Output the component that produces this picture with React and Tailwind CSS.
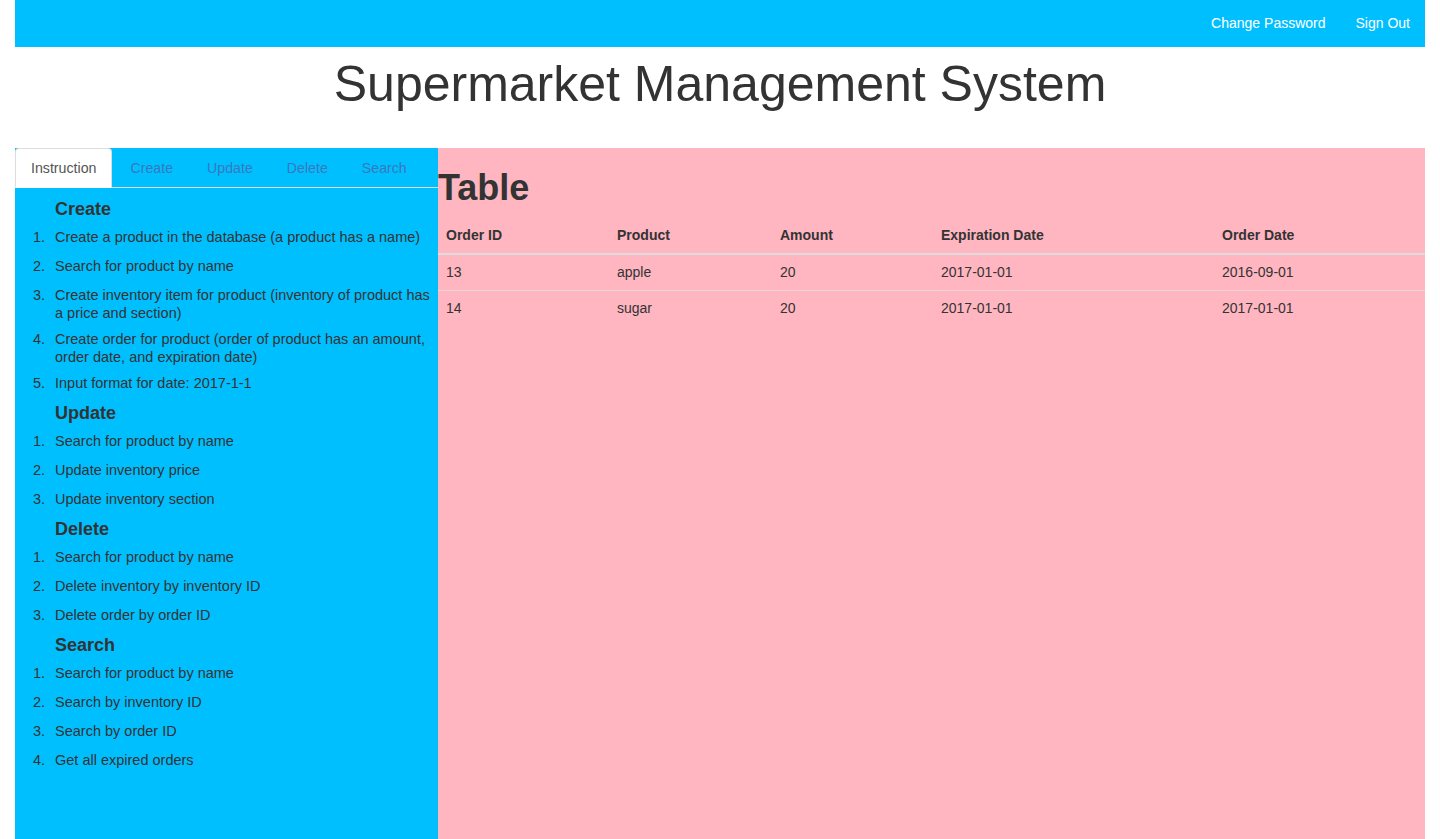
import React from 'react'

const sections = [
  {
    title: 'Create',
    items: [
      'Create a product in the database (a product has a name)',
      'Search for product by name',
      'Create inventory item for product (inventory of product has a price and section)',
      'Create order for product (order of product has an amount, order date, and expiration date)',
      'Input format for date: 2017-1-1',
    ],
  },
  {
    title: 'Update',
    items: ['Search for product by name', 'Update inventory price', 'Update inventory section'],
  },
  {
    title: 'Delete',
    items: ['Search for product by name', 'Delete inventory by inventory ID', 'Delete order by order ID'],
  },
  {
    title: 'Search',
    items: ['Search for product by name', 'Search by inventory ID', 'Search by order ID', 'Get all expired orders'],
  },
]

const tabs = ['Instruction', 'Create', 'Update', 'Delete', 'Search']

const rows = [
  { id: '13', product: 'apple', amount: '20', exp: '2017-01-01', order: '2016-09-01' },
  { id: '14', product: 'sugar', amount: '20', exp: '2017-01-01', order: '2017-01-01' },
]

const App = () => {
  return (
    <div className="min-h-screen bg-white px-[15px] text-[14px] text-[#333]" style={{ fontFamily: '"Liberation Sans", Arial, sans-serif' }}>
      <nav className="flex h-[47px] items-center justify-end bg-[#00bfff] pb-[2px]">
        <a className="px-[15px] leading-[20px] text-white">Change Password</a>
        <a className="px-[15px] leading-[20px] text-white">Sign Out</a>
      </nav>

      <div className="pt-[11px] pb-[37px] text-center">
        <h1 className="text-[50px] leading-[53px] font-normal">Supermarket Management System</h1>
      </div>

      <div className="flex min-h-[691px]">
        <div className="w-[423px] shrink-0 bg-[#00bfff]">
          <ul className="flex border-b border-[#ddd]">
            {tabs.map((t, i) => (
              <li key={t} className="-mb-px mr-[2px]">
                <a
                  className={
                    i === 0
                      ? 'block rounded-t-[4px] border border-[#ddd] border-b-transparent bg-white px-[15px] py-[9px] text-[14.2px] leading-[20px] text-[#555]'
                      : 'block rounded-t-[4px] border border-transparent px-[15px] py-[9px] text-[14.2px] leading-[20px] text-[#3a78bd]'
                  }
                >
                  {t}
                </a>
              </li>
            ))}
          </ul>

          <div className="pt-[11px]">
            {sections.map((s) => (
              <div key={s.title}>
                <h4 className="mb-[9px] pl-[40px] text-[18px] leading-[20px] font-semibold">{s.title}</h4>
                <ol>
                  {s.items.map((it, n) => (
                    <li key={it} className="flex min-h-[29px] pb-[8px] text-[14.5px] leading-[18px]">
                      <span className="w-[30px] shrink-0 text-right">{n + 1}.</span>
                      <span className="ml-[10px]">{it}</span>
                    </li>
                  ))}
                </ol>
              </div>
            ))}
          </div>
        </div>

        <div className="flex-1 bg-[#ffb6c1]">
          <h1 className="mt-[20px] mb-[10px] text-[36px] leading-[40px] font-bold">Table</h1>
          <table className="w-full border-collapse text-left">
            <thead>
              <tr className="border-b-2 border-[#ddd]">
                <th className="w-[171px] p-[8px] leading-[19px] font-bold">Order ID</th>
                <th className="w-[163px] p-[8px] leading-[19px] font-bold">Product</th>
                <th className="w-[161px] p-[8px] leading-[19px] font-bold">Amount</th>
                <th className="w-[281px] p-[8px] leading-[19px] font-bold">Expiration Date</th>
                <th className="p-[8px] leading-[19px] font-bold">Order Date</th>
              </tr>
            </thead>
            <tbody>
              {rows.map((r, i) => (
                <tr key={r.id} className={i === 0 ? '' : 'border-t border-[#ead6da]'}>
                  <td className="p-[8px] leading-[19px]">{r.id}</td>
                  <td className="p-[8px] leading-[19px]">{r.product}</td>
                  <td className="p-[8px] leading-[19px]">{r.amount}</td>
                  <td className="p-[8px] leading-[19px]">{r.exp}</td>
                  <td className="p-[8px] leading-[19px]">{r.order}</td>
                </tr>
              ))}
            </tbody>
          </table>
        </div>
      </div>
    </div>
  )
}

export default App
